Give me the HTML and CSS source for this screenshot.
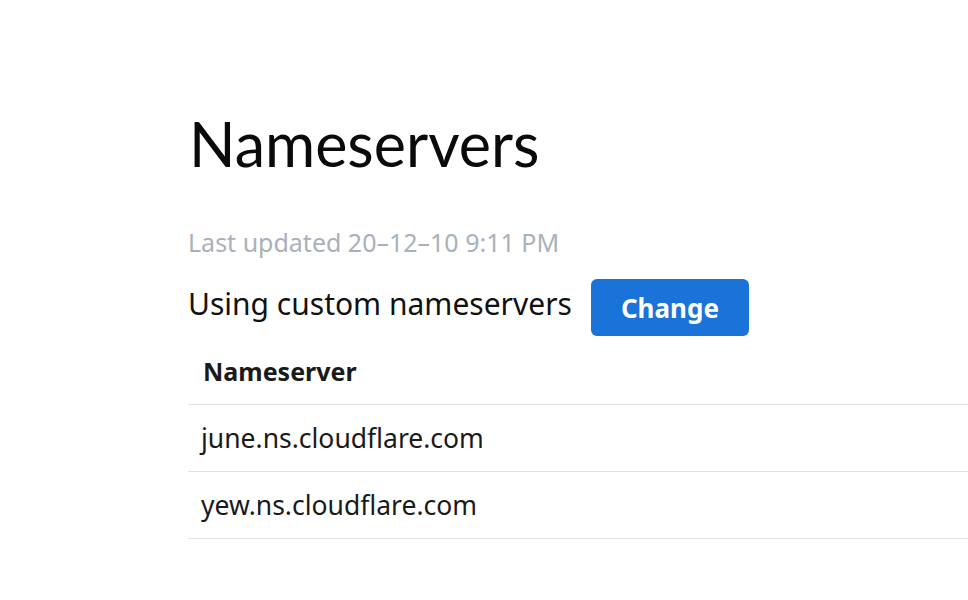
FILE: index.html
```html
<!DOCTYPE html>
<html>
<head>
<meta charset="utf-8">
<link rel="stylesheet" href="styles.css">
</head>
<body>
<main class="page">
  <h1 class="title">Nameservers</h1>
  <p class="updated">Last updated 20–12–10 9:11 PM</p>
  <div class="status">
    <span class="status-text">Using custom nameservers</span>
    <button class="btn">Change</button>
  </div>
  <div class="table">
    <div class="row head">Nameserver</div>
    <div class="row">june.ns.cloudflare.com</div>
    <div class="row">yew.ns.cloudflare.com</div>
  </div>
</main>
</body>
</html>
```
FILE: styles.css
```css
html, body {
  margin: 0;
  padding: 0;
  background: #ffffff;
}
.page {
  padding: 108px 0 0 188px;
  font-family: "Noto Sans", "Open Sans", sans-serif;
  color: #111111;
}
.title {
  margin: 0 0 0 1px;
  font-family: Lato, "Open Sans", sans-serif;
  font-weight: 400;
  font-size: 61px;
  line-height: 72px;
  color: #0a0a0a;
}
.updated {
  margin: 46px 0 0 0;
  font-size: 25px;
  line-height: 32px;
  color: #aab1ba;
}
.status {
  display: flex;
  align-items: center;
  gap: 19px;
  margin-top: 17px;
  margin-left: 0;
}
.status-text {
  font-size: 30px;
  line-height: 40px;
  margin-top: -4px;
}
.btn {
  width: 158px;
  height: 57px;
  border: 0;
  border-radius: 6px;
  background: #1a73d8;
  color: #ffffff;
  font-family: "Noto Sans", sans-serif;
  font-weight: 700;
  font-size: 26px;
  padding: 0;
  margin-top: 4px;
}
.table {
  margin-top: 2px;
}
.row {
  height: 67px;
  box-sizing: border-box;
  border-bottom: 1px solid #e3e3e3;
  display: flex;
  align-items: center;
  padding-left: 13px;
  font-size: 26.5px;
  color: #1a1a1a;
}
.row.head {
  height: 67px;
  font-weight: 700;
  font-size: 25px;
  padding-left: 15px;
}
```
